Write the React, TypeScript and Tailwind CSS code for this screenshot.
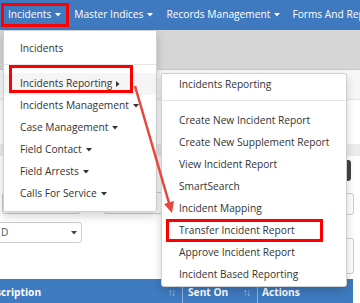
import { ArrowUpDown } from "lucide-react";

function CaretDown({ className = "" }: { className?: string }) {
  return (
    <svg width="6" height="4" viewBox="0 0 6 4" className={className}>
      <path d="M0 0h6L3 3.5z" fill="currentColor" />
    </svg>
  );
}

function CaretRight() {
  return (
    <svg width="4" height="6" viewBox="0 0 4 6">
      <path d="M0 0v6l3.5-3z" fill="currentColor" />
    </svg>
  );
}

const navItems = ["Master Indices", "Records Management"];

const firstMenu = [
  "Incidents Management",
  "Case Management",
  "Field Contact",
  "Field Arrests",
  "Calls For Service",
];

const reportMenu = [
  "Create New Incident Report",
  "Create New Supplement Report",
  "View Incident Report",
  "SmartSearch",
  "Incident Mapping",
  "Transfer Incident Report",
  "Approve Incident Report",
  "Incident Based Reporting",
];

export default function App() {
  return (
    <div className="relative w-[360px] h-[303px] overflow-hidden bg-white font-['Open_Sans',sans-serif] text-[10.2px] text-[#333]">
      {/* top nav */}
      <nav className="relative h-[30px] bg-[#3f7ac0] flex items-center pl-[2px] text-white whitespace-nowrap">
        <div className="relative h-[30px] flex items-center gap-[4px] px-[6px]">
          Incidents
          <CaretDown />
          <span className="absolute left-[-1px] top-[3px] w-[68px] h-[24px] border-[3px] border-[#f00]" />
        </div>
        {navItems.map((n) => (
          <div key={n} className="flex items-center gap-[4px] px-[6px] ml-[1px]">
            {n}
            <CaretDown />
          </div>
        ))}
        <div className="px-[6px]">Forms And Reports</div>
      </nav>

      {/* page behind the menus */}
      <div className="h-[40px] bg-[#d6d6d6] border-b border-[#c9c9c9]" />
      <div className="h-[30px] bg-[#f7f7f7] border-b border-[#e4e4e4]" />
      <div className="h-[44px]" />
      <div className="h-[12px] bg-[#ececec]" />
      <div className="flex h-[123px]">
        <div className="flex flex-col">
          <div className="flex gap-[22px] mt-[36px] pl-[2px]">
            <div className="w-[79px] h-[22px] rounded-[3px] border border-[#ccc]" />
            <div className="w-[60px] h-[22px] rounded-[3px] border border-[#ccc]" />
          </div>
          <div className="mt-[8px] -ml-[10px] w-[92px] h-[21px] rounded-[3px] border border-[#ccc] flex items-center justify-between pl-[10px] pr-[4px] text-[#555]">
            D
            <CaretDown className="text-[#444]" />
          </div>
        </div>
        <div className="ml-auto mr-[6px] flex flex-col items-end">
          <div className="mt-[4px] mr-[3px] w-[40px] h-[21px] rounded-[3px] bg-[#444]" />
          <div className="mt-[12px] w-[60px] h-[22px] rounded-[3px] border border-[#ccc]" />
          <div className="mt-[23px] w-[60px] h-[36px] rounded-[3px] border border-[#ccc]" />
        </div>
      </div>
      <div className="w-[353px] h-[27px] bg-[#3f7bc1] flex text-white font-bold whitespace-nowrap">
        <div className="w-[182px] flex items-center justify-between pr-[6px]">
          <span className="-ml-[17.5px]">Description</span>
          <ArrowUpDown size={8} strokeWidth={1.5} className="text-[#a9c6ea]" />
        </div>
        <div className="w-[75px] flex items-center justify-between pl-[5px] pr-[6px] border-l border-[#8fb3de]">
          <span>Sent On</span>
          <ArrowUpDown size={8} strokeWidth={1.5} className="text-[#a9c6ea]" />
        </div>
        <div className="flex-1 flex items-center pl-[4px] border-l border-[#8fb3de]">Actions</div>
      </div>

      {/* Incidents dropdown */}
      <div className="absolute left-[3px] top-[30px] w-[154px] bg-white border border-[#d0d0d0] rounded-b-[3px] shadow-[0_4px_10px_rgba(0,0,0,0.18)] pt-[7px] pb-[6px] whitespace-nowrap">
        <div className="h-[22px] flex items-center pl-[16px]">Incidents</div>
        <div className="mt-[4px] mb-[8px] h-px bg-[#e5e5e5]" />
        <div className="relative h-[22px] flex items-center gap-[4px] pl-[16px] bg-[#f5f5f5]">
          Incidents Reporting
          <CaretRight />
          <span className="absolute left-[5px] top-[-8px] w-[124px] h-[28px] border-[3px] border-[#f00]" />
        </div>
        {firstMenu.map((m) => (
          <div key={m} className="h-[22px] flex items-center gap-[4px] pl-[16px]">
            {m}
            <CaretDown className="text-[#333]" />
          </div>
        ))}
      </div>

      {/* Incidents Reporting submenu */}
      <div className="absolute left-[161px] top-[73px] w-[186px] bg-white border border-[#d0d0d0] rounded-[3px] shadow-[0_4px_10px_rgba(0,0,0,0.18)] whitespace-nowrap">
        <div className="h-[22px] flex items-center pl-[17px]">Incidents Reporting</div>
        <div className="mt-[4px] mb-[9px] h-px bg-[#e5e5e5]" />
        {reportMenu.map((m) => (
          <div key={m} className="relative h-[22px] flex items-center pl-[17px]">
            {m}
            {m === "Transfer Incident Report" && (
              <span className="absolute left-[4px] top-[-1px] w-[157px] h-[23px] border-[3px] border-[#f00]" />
            )}
          </div>
        ))}
      </div>

      {/* annotation arrow */}
      <svg className="absolute inset-0 pointer-events-none" width="360" height="303">
        <line x1="135" y1="86" x2="169" y2="203" stroke="#e8453c" strokeWidth="2.5" />
        <polygon points="172,213 164,204 174,201" fill="#e8453c" />
      </svg>
    </div>
  );
}
